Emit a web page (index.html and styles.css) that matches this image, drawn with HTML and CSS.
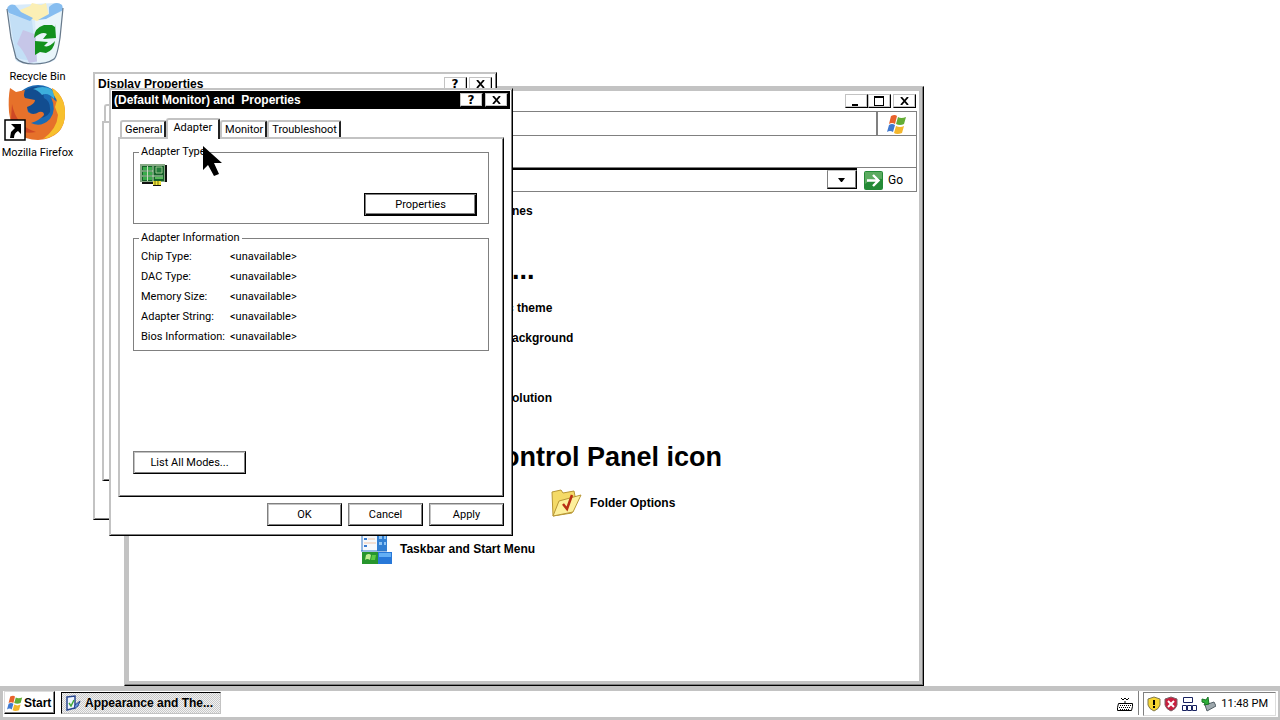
FILE: index.html
```html
<!DOCTYPE html>
<html lang="en">
<head>
<meta charset="utf-8">
<title>Desktop</title>
<link rel="stylesheet" href="styles.css">
</head>
<body>
<svg class="defs" aria-hidden="true">
  <symbol id="flag" viewBox="0 0 20 20">
    <path d="M4 2q4-2 6 0l-2 8q-3-2-6 0z" fill="#e8622c"/>
    <path d="M11 3q3 2 8 0l-2 7q-4 2-8 0z" fill="#63ad35"/>
    <path d="M2 11q3-2 6 0l-2 7q-3-2-6 0z" fill="#3f78cf"/>
    <path d="M9 12q4 2 8 0l-2 7q-5 2-8 0z" fill="#f3b62c"/>
  </symbol>
  <symbol id="cross" viewBox="0 0 9 8"><path d="M1 0l7 8M8 0l-7 8" stroke="#000" stroke-width="1.8" fill="none"/></symbol>
</svg>

<main class="desktop">
  <ul class="shortcuts">
    <li class="shortcut">
      <svg class="bin" viewBox="0 0 60 64">
        <path d="M1 7q0-4 5-4l43-2q8 0 8 5l-3 30-4 20q-3 6-22 6T9 56L5 36z" fill="#d8ebfa"/>
        <path d="M3 12l23 6 4 40q-13 1-20-3z" fill="#c3dff6"/>
        <path d="M17 28l14 5 2 26-10 2q-6-14-12-19z" fill="#c6c6e8"/>
        <path d="M29 17l27-7-5 45q-6 6-20 5z" fill="#e9f5fa"/>
        <path d="M14 8l10-4 2-3 9 2 5-2 3 13-12 5-15-5z" fill="#fbefb5"/>
        <path d="M1 7q2-6 8-4l6 7 12 6-3 3L3 11zM43 5q7-7 13-2l1 5-17 9-8 1 11-6z" fill="#86bdf0"/>
        <path d="M1 7l4 29 5 20q5 6 18 6t20-5q3-2 6-21l3-30" fill="none" stroke="#66788a" stroke-width="1.2"/>
        <g fill="#13911d"><path d="M28 36q0-10 10-13h8l3 2v-3l1 14-13 1 4-5q-5-3-13 4z"/><path d="M49 39q-1 9-9 12l-6-1-5 3V39l13 1-4 4q5 2 11-5z"/></g>
      </svg>
      <span>Recycle Bin</span>
    </li>
    <li class="shortcut">
      <svg class="fox" viewBox="0 0 62 56">
        <circle cx="34" cy="26" r="26" fill="#1b6bb4"/>
        <path d="M19 7q12-9 27-3-8 1-6 9 7 3 6 14-5 8-15 5L18 20z" fill="#124d90"/>
        <path d="M29 4q10-4 18 0 4 5 3 10-6-7-12-4-4-5-9-6z" fill="#3caedc"/>
        <path d="M6 3l6 4 9-2q-2 5 0 8l10 2q0 4-8 7l1 5q5 4 11 0 5-1 5 3-4 5-13 8 10 5 19-4 7-9 1-22l6 5Q50 8 48 3q13 8 13 25 0 25-27 27Q8 55 5 27 4 13 6 3z" fill="#e6712a"/>
        <path d="M48 3q13 8 13 25 0 22-22 26 14-10 15-24l-3-8 2-7q-4-5-5-12z" fill="#f7c02d"/>
        <path d="M8 19q4 22 24 28-19 4-25-13z" fill="#cf4825"/>
        <path d="M1 35h20v20H1z" fill="#fff" stroke="#000" stroke-width="1.5"/>
        <path d="M7 39h10v10l-3-3q-4 2-4 7H6l1-6 4-4z" fill="#000"/>
      </svg>
      <span>Mozilla Firefox</span>
    </li>
  </ul>

  <section class="window explorer">
    <header class="explorer-title">
      <button class="caption" aria-label="Minimize"><svg width="10" height="9"><path d="M1 7h6v2H1z"/></svg></button>
      <button class="caption" aria-label="Maximize"><svg width="10" height="10"><path d="M0 0h10v10H0zM1 2v7h8V2z" fill-rule="evenodd"/></svg></button>
      <button class="caption close" aria-label="Close"><svg width="9" height="8"><use href="#cross"/></svg></button>
    </header>
    <div class="rebar">
      <div class="menubar"><div class="brand"><svg width="20" height="20"><use href="#flag"/></svg></div></div>
      <div class="toolbar"></div>
      <div class="address">
        <div class="combo"><button class="drop" aria-label="Show addresses"><svg width="8" height="4"><path d="M0 0h7L4 4H3z"/></svg></button></div>
        <button class="go"><svg width="19" height="19"><rect width="19" height="19" rx="2" fill="#248a36"/><path d="M1 1h17v7Q9 6 1 13z" fill="#5cab60"/><path d="M3 9.500h11M9 4l5.500 5.500L9 15" stroke="#fff" stroke-width="2.400" fill="none"/></svg>Go</button>
      </div>
    </div>
    <div class="content">
      <p class="row">nes</p>
      <h2 class="heading">...</h2>
      <ul class="tasks">
        <li class="row tuck">c theme</li>
        <li class="row">ackground</li>
        <li class="row tuck">r</li>
        <li class="row">olution</li>
      </ul>
      <h2 class="heading pick">ontrol Panel icon</h2>
      <div class="applets">
        <a class="applet second" href="#folder">
          <svg width="32" height="30" viewBox="0 0 32 30"><path d="M1 4l9-2 2 3 11-2 1 5-3 17L2 28z" fill="#f4da67" stroke="#b79635"/><path d="M8 13l22-6-8 17-20 4z" fill="#fdf09b" stroke="#b79635"/><path d="M12 16l4 5 5-14" fill="none" stroke="#b92f15" stroke-width="2.500"/></svg>
          Folder Options
        </a>
        <a class="applet" href="#taskbar">
          <svg width="32" height="32" viewBox="0 0 32 32"><path d="M1 0h15v18H1z" fill="#f5f9fd"/><path d="M16 0h10v18H16z" fill="#317fd2"/><path d="M18 3h3v3h-3zM18 9h3v3h-3zM23 3h2v3h-2zM23 9h2v3h-2z" fill="#8fc5f4"/><path d="M3 6h3M3 13h3" stroke="#397bd0" stroke-width="2"/><path d="M7 6h7M3 10h12" stroke="#efc5a7"/><path d="M1 0v18M0 18h26" stroke="#3177c6"/><path d="M1 19h16v12H1z" fill="#27952d"/><path d="M17 19h14v12H17z" fill="#2878d8"/><path d="M18 20h12v4H18z" fill="#64aff5"/><path d="M5 22q3-2 5 0l-1 5q-3-2-5 0z" fill="#c1ec93"/><path d="M11 22h4l-1 5h-4z" fill="#5bca42"/></svg>
          Taskbar and Start Menu
        </a>
      </div>
    </div>
  </section>

  <section class="window dialog rear">
    <header class="titlebar"><h1>Display Properties</h1>
      <button class="caption" aria-label="Help">?</button><button class="caption" aria-label="Close"><svg width="9" height="8"><use href="#cross"/></svg></button>
    </header>
    <div class="tabs"><span class="tab blank"></span></div>
    <div class="panel"></div>
    <div class="actions"></div>
  </section>

  <section class="window dialog front">
    <header class="titlebar active"><h1>(Default Monitor) and&nbsp; Properties</h1>
      <button class="caption" aria-label="Help">?</button><button class="caption" aria-label="Close"><svg width="9" height="8"><use href="#cross"/></svg></button>
    </header>
    <div class="tabs" role="tablist">
      <button class="tab" role="tab">General</button>
      <button class="tab selected" role="tab" aria-selected="true">Adapter</button>
      <button class="tab" role="tab">Monitor</button>
      <button class="tab" role="tab">Troubleshoot</button>
    </div>
    <div class="panel" role="tabpanel">
      <fieldset class="group type">
        <legend>Adapter Type</legend>
        <svg width="28" height="24" viewBox="0 0 28 24"><path d="M2 2h25v17H21v4H13v-2H2z" fill="#111"/><path d="M0 1h25v18H0z" fill="#87a985"/><path d="M2 3h22v15H2z" fill="#15612a"/><path d="M3 4h4v3H3zM8 4h4v3H8zM3 9h4v3H3zM8 9h4v3H8zM3 14h4v3H3zM8 14h4v3H8z" fill="#3bab4b"/><path d="M2 8h11M2 13h21M13 3v15M7.500 3v15" stroke="#c7dfbe"/><path d="M16 4h6v6h-6z" fill="#247b3b" stroke="#9bc68e"/><path d="M15 15h8" stroke="#57ba59" stroke-width="2"/><path d="M13 18h8v4h-8z" fill="#eee43b"/><path d="M15 18v4M18 18v4" stroke="#776f10"/></svg>
        <button class="button wide default">Properties</button>
      </fieldset>
      <fieldset class="group info">
        <legend>Adapter Information</legend>
        <dl>
          <dt>Chip Type:</dt><dd>&lt;unavailable&gt;</dd>
          <dt>DAC Type:</dt><dd>&lt;unavailable&gt;</dd>
          <dt>Memory Size:</dt><dd>&lt;unavailable&gt;</dd>
          <dt>Adapter String:</dt><dd>&lt;unavailable&gt;</dd>
          <dt>Bios Information:</dt><dd>&lt;unavailable&gt;</dd>
        </dl>
      </fieldset>
      <button class="button wide modes">List All Modes...</button>
    </div>
    <div class="actions">
      <button class="button">OK</button>
      <button class="button">Cancel</button>
      <button class="button">Apply</button>
    </div>
  </section>

  <svg class="pointer" width="20" height="32" viewBox="0 0 20 32"><path d="M0 0v24l5-5 6 11 5-2-5-11h8z"/></svg>
</main>

<footer class="taskbar">
  <button class="start"><svg width="16" height="16"><use href="#flag"/></svg>Start</button>
  <button class="task"><svg width="16" height="16" viewBox="0 0 16 16"><path d="M2 2l8-1v12l-8 2z" fill="#eef6ff" stroke="#27458f" stroke-width="1.500"/><path d="M4 8l2 3 3-6" stroke="#45a83b" stroke-width="1.500" fill="none"/><path d="M10 10l5-4-2 5-4 3z" fill="#6c9be2" stroke="#27458f"/></svg>Appearance and The...</button>
  <div class="language"><svg width="17" height="15" viewBox="0 0 17 15"><path d="M1.500 6.500h14v3l-1 4H.5v-3z" fill="#fff" stroke="#000"/><path d="M3 8.500h11M2 10.500h12M3 12.500h10" stroke="#000" stroke-dasharray="1 1"/><path d="M4 1l2 2 2-2 2 2 2-2M8 4v2" stroke="#000" fill="none"/></svg></div>
  <div class="tray">
    <svg width="14" height="16" viewBox="0 0 14 16"><path d="M7 1l6 2v6q-1 4-6 6-5-2-6-6V3z" fill="#f5d532" stroke="#827a50"/><path d="M6 4h2v5H6zM6 10h2v2H6z"/></svg>
    <svg width="14" height="16" viewBox="0 0 14 16"><path d="M7 1l6 2v6q-1 4-6 6-5-2-6-6V3z" fill="#c91e3d" stroke="#776268"/><path d="M4 5l6 6M10 5l-6 6" stroke="#fff" stroke-width="2"/></svg>
    <svg width="17" height="16" viewBox="0 0 17 16"><path d="M2.500 1.500h9v5h-9zM1.500 9.500h4v5h-4zM6.500 9.500h4v5h-4zM11.500 9.500h4v5h-4z" fill="#fff" stroke="#17215f"/></svg>
    <svg width="15" height="16" viewBox="0 0 15 16"><path d="M4 9l9-3 2 4-9 5z" fill="#9da7ac" stroke="#535f66"/><path d="M1 3l4 1 2-3 1 7-5 1 1-2-3-1z" fill="#2cae38" stroke="#187424"/></svg>
    <time>11:48 PM</time>
  </div>
</footer>
</body>
</html>
```
FILE: styles.css
```css
* { box-sizing: border-box; }
:root { --face: #c3c3c3; --shade: #808080; }
body {
  margin: 0; min-height: 100vh; display: flex; flex-direction: column;
  background: #fff; color: #000; font: 11px/14px Roboto, "Noto Sans", sans-serif;
}
h1, h2, p, ul, dl, dd { margin: 0; padding: 0; }
ul { list-style: none; }
button { margin: 0; padding: 0; border: 0; background: #fff; color: inherit; font: inherit; }
a { color: inherit; text-decoration: none; }
svg { flex: none; }
.defs { position: absolute; width: 0; height: 0; }

.desktop { flex: 1; position: relative; overflow: hidden; }
.shortcuts { width: 75px; }
.shortcut { display: flex; flex-direction: column; align-items: center; white-space: nowrap; }
.bin { width: 60px; height: 64px; margin: 2px 3px 4px 0; }
.fox { width: 62px; height: 58px; margin: 0 5px 4px 0; }

.window {
  position: absolute; display: flex; flex-direction: column; background: #fff;
  border: 1px solid; border-color: var(--face) #000 #000 var(--face);
}
.caption {
  width: 23px; height: 14px; display: grid; place-items: center; padding-right: 1px;
  border: 1px solid; border-color: var(--face) #000 #000 var(--face);
  box-shadow: inset -1px -1px var(--face); font: bold 12px/12px "DejaVu Sans", sans-serif;
}

.explorer {
  left: 124px; top: 86px; width: 800px; height: 600px; padding: 4px;
  box-shadow: inset -1px -1px var(--shade), inset 0 0 0 4px var(--face);
}
.explorer-title { display: flex; justify-content: flex-end; height: 20px; padding: 3px 3px 0 0; }
.explorer-title .close { margin-left: 2px; }
.rebar { margin-right: 2px; border: 1px solid var(--shade); }
.menubar { display: flex; justify-content: flex-end; height: 24px; border-bottom: 1px solid var(--shade); }
.brand { display: grid; place-items: center; width: 40px; border-left: 2px solid var(--shade); }
.toolbar { height: 32px; border-bottom: 1px solid var(--shade); }
.address { display: flex; height: 23px; }
.combo { flex: 1; display: flex; justify-content: flex-end; height: 21px; border-top: 2px solid #000; }
.drop { width: 30px; display: grid; place-items: center; border: 1px solid; border-color: var(--face) #000 #000 var(--shade); box-shadow: inset -1px -1px var(--shade); }
.go { display: flex; align-items: center; gap: 5px; width: 59px; padding: 1px 0 0 7px; font-size: 12px; }
.content { padding: 4px 0 0 383px; white-space: nowrap; font: bold 12px/30px "Liberation Sans", Arial, sans-serif; }
.tuck { margin-left: -5px; }
.pick { margin-left: -9px; }
.heading { font-size: 27px; line-height: 36px; margin-top: 26px; margin-bottom: 5px; }
.applets { display: grid; grid-template-columns: 190px 190px; grid-auto-rows: 46px; margin-left: -151px; }
.applet { display: flex; align-items: center; gap: 7px; }
.second { grid-column: 2; }

.dialog { width: 404px; padding: 2px; box-shadow: inset 1px 1px var(--face), inset -1px -1px var(--shade); }
.rear { left: 93px; top: 72px; }
.front { left: 109px; top: 88px; }
.titlebar { display: flex; align-items: center; gap: 2px; height: 18px; padding: 0 2px; }
.titlebar h1 { flex: 1; font: bold 12px/18px "Liberation Sans", Arial, sans-serif; white-space: nowrap; }
.active { background: #000; }
.active h1 { color: #fff; }
.tabs { display: flex; align-items: flex-end; height: 28px; padding-left: 8px; }
.tab {
  height: 17px; padding: 0 2px 0 3px; background: #fff; border: 2px solid var(--face);
  border-right: 2px solid #222; border-bottom: 0; border-radius: 3px 2px 0 0; line-height: 14px;
}
.tab.selected { height: 21px; padding: 0 6px 4px 5px; margin-bottom: -2px; z-index: 1; position: relative; }
.blank { width: 48px; }
.panel {
  height: 360px; margin: 0 6px; padding: 6px 14px 0 13px;
  border: 2px solid var(--face); border-right: 1px solid #000; border-bottom: 1px solid #000;
  box-shadow: inset -1px -1px var(--shade);
}
.group { margin: 0; padding: 0 10px 0 6px; border: 1px solid var(--shade); min-width: 0; }
.group legend { padding: 0 2px; margin-left: -1px; line-height: 14px; }
.type { height: 79px; display: flex; }
.type .button { margin: 34px 1px 0 auto; }
.type svg { margin-top: 4px; }
.info { height: 120px; margin-top: 7px; padding: 0 6px; }
.info dl { display: grid; grid-template-columns: 89px 1fr; line-height: 20px; padding: 2px 1px 0; white-space: nowrap; }
.button {
  width: 75px; height: 23px; border: 1px solid; border-color: var(--shade) #000 #000 var(--shade);
  box-shadow: inset 1px 1px var(--face), inset -1px -1px var(--shade);
}
.wide { width: 113px; }
.default { border: 1px solid #000; box-shadow: inset 1px 1px var(--shade), inset -1px -1px #000, inset -2px -2px var(--shade); }
.modes { display: block; margin-top: 100px; }
.actions { display: flex; justify-content: flex-end; gap: 6px; height: 36px; padding: 6px 6px 0 0; }
.pointer { position: absolute; left: 203px; top: 146px; }

.taskbar {
  display: flex; height: 34px; padding: 0 2px 0 1px; background: #fff;
  border: 3px solid var(--face); border-top-width: 5px; border-right-width: 2px;
}
.start, .task { display: flex; align-items: center; font: bold 12px/20px "Liberation Sans", Arial, sans-serif; white-space: nowrap; }
.start { width: 51px; height: 23px; gap: 1px; padding-left: 2px; border: 1px solid; border-color: #ddd #000 #000 #ddd; box-shadow: inset -1px -1px var(--shade); }
.task {
  width: 160px; height: 22px; margin: 1px 0 0 6px; gap: 4px; padding-left: 3px;
  border: 1px solid; border-color: #000 var(--face) var(--face) #000;
  background: repeating-conic-gradient(#c9c9c9 0 25%, #f2f2f2 0 50%) 0 0 / 2px 2px;
}
.language { margin-left: auto; width: 22px; height: 24px; padding-top: 6px; border-right: 1px solid var(--shade); }
.tray {
  display: flex; align-items: center; gap: 3px; margin: 1px 0 0 4px; width: 133px; height: 24px; padding: 0 7px 0 3px;
  border: 1px solid; border-color: var(--shade) #ddd #ddd var(--shade);
}
.tray time { margin-left: auto; font-size: 11px; line-height: 20px; white-space: nowrap; }
```
